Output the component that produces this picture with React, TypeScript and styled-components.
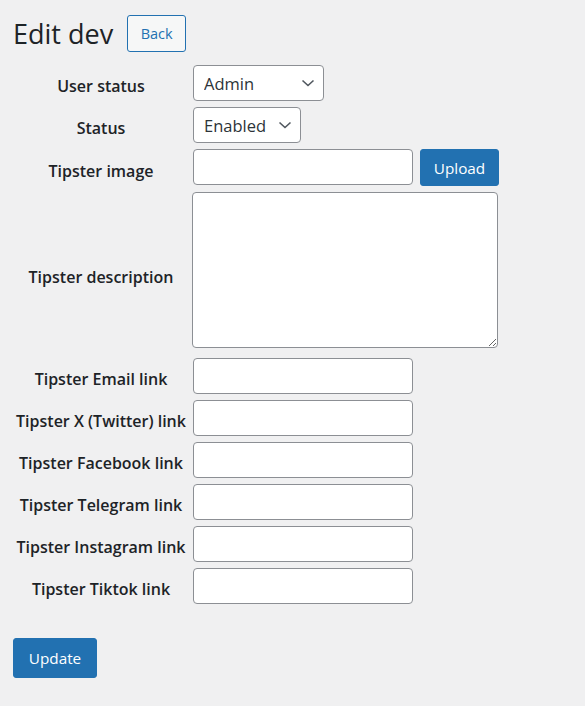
import React from "react";
import styled, { createGlobalStyle } from "styled-components";

const Global = createGlobalStyle`
  html, body { margin: 0; padding: 0; background: #f0f0f1; }
  body { font-family: "Open Sans", "Noto Sans", sans-serif; color: #1d2327; }
  * { box-sizing: border-box; }
`;

const Page = styled.div`
  padding: 15px 13px 20px 13px;
  display: flex;
  flex-direction: column;
`;

const Header = styled.div`
  display: flex;
  align-items: center;
  gap: 14px;
  margin-bottom: 13px;
`;

const Title = styled.h1`
  margin: 0;
  font-size: 27px;
  font-weight: 400;
  line-height: 37px;
  color: #1d2327;
`;

const OutlineButton = styled.button`
  height: 37px;
  width: 59px;
  border: 1px solid #2271b1;
  border-radius: 3px;
  background: #f6f7f7;
  color: #2271b1;
  font-family: inherit;
  font-size: 14.5px;
  padding: 0;
`;

const Form = styled.div`
  display: grid;
  grid-template-columns: 176px auto;
  column-gap: 4px;
  row-gap: 6px;
  justify-content: start;
`;

const Label = styled.div<{ $shift?: number }>`
  font-weight: 600;
  font-size: 16px;
  line-height: 22px;
  text-align: center;
  align-self: center;
  padding-top: ${(p) => p.$shift ?? 6}px;
  color: #1d2327;
  white-space: nowrap;
`;

const Cell = styled.div<{ $extra?: number }>`
  display: flex;
  gap: 7px;
  align-items: flex-start;
  margin-bottom: ${(p) => p.$extra ?? 0}px;
`;

const TextInput = styled.input`
  width: 220px;
  height: 36px;
  border: 1px solid #8c8f94;
  border-radius: 4px;
  background: #fff;
  font-family: inherit;
  font-size: 14px;
  padding: 0 8px;
  margin: 0;
`;

const TextArea = styled.textarea`
  width: 306px;
  height: 156px;
  margin: 0 0 0 -1px;
  border: 1px solid #8c8f94;
  border-radius: 4px;
  background: #fff;
  font-family: inherit;
  padding: 2px 6px;
  resize: both;
`;

const SelectWrap = styled.div<{ $w: number }>`
  position: relative;
  width: ${(p) => p.$w}px;
  height: 36px;
`;

const Select = styled.select`
  appearance: none;
  -webkit-appearance: none;
  width: 100%;
  height: 100%;
  border: 1px solid #8c8f94;
  border-radius: 4px;
  background: #fff;
  color: #2c3338;
  font-family: inherit;
  font-size: 16.5px;
  padding: 0 24px 0 10px;
  margin: 0;
`;

const Chevron = styled.svg`
  position: absolute;
  right: 9px;
  top: 13px;
  pointer-events: none;
`;

const PrimaryButton = styled.button<{ $w: number; $h: number }>`
  width: ${(p) => p.$w}px;
  height: ${(p) => p.$h}px;
  background: #2271b1;
  border: 1px solid #2271b1;
  border-radius: 3px;
  color: #fff;
  font-family: inherit;
  font-size: 15.3px;
  padding: 0;
`;

const Footer = styled.div`
  margin-top: 34px;
`;

const Arrow = () => (
  <Chevron width="14" height="10" viewBox="0 0 14 10">
    <path d="M1.5 2.5 L7 7.5 L12.5 2.5" fill="none" stroke="#50575e" strokeWidth="1.6" />
  </Chevron>
);

const links = [
  "Tipster Email link",
  "Tipster X (Twitter) link",
  "Tipster Facebook link",
  "Tipster Telegram link",
  "Tipster Instagram link",
  "Tipster Tiktok link",
];

export default function App() {
  return (
    <>
      <Global />
      <Page>
        <Header>
          <Title>Edit dev</Title>
          <OutlineButton>Back</OutlineButton>
        </Header>
        <Form>
          <Label>User status</Label>
          <Cell>
            <SelectWrap $w={131}>
              <Select defaultValue="admin">
                <option value="admin">Admin</option>
                <option value="user">User</option>
              </Select>
              <Arrow />
            </SelectWrap>
          </Cell>
          <Label>Status</Label>
          <Cell>
            <SelectWrap $w={108}>
              <Select defaultValue="enabled">
                <option value="enabled">Enabled</option>
                <option value="disabled">Disabled</option>
              </Select>
              <Arrow />
            </SelectWrap>
          </Cell>
          <Label>Tipster image</Label>
          <Cell>
            <TextInput type="text" />
            <PrimaryButton $w={79} $h={37}>Upload</PrimaryButton>
          </Cell>
          <Label $shift={10}>Tipster description</Label>
          <Cell $extra={4}>
            <TextArea />
          </Cell>
          {links.map((l) => (
            <React.Fragment key={l}>
              <Label>{l}</Label>
              <Cell>
                <TextInput type="text" />
              </Cell>
            </React.Fragment>
          ))}
        </Form>
        <Footer>
          <PrimaryButton $w={84} $h={40}>Update</PrimaryButton>
        </Footer>
      </Page>
    </>
  );
}
